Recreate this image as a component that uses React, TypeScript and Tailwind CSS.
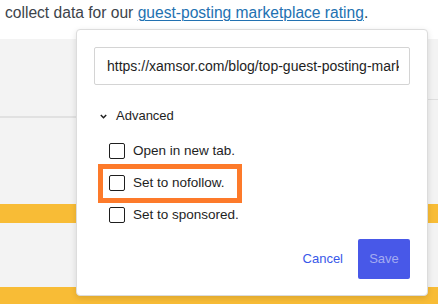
import React from "react";

function Checkbox() {
  return <span className="block w-4 h-4 shrink-0 rounded-[2px] border-[1.5px] border-[#1e1e1e] bg-white" />;
}

function Option({ label }: { label: string }) {
  return (
    <div className="flex h-8 items-center pl-[15px] gap-2">
      <Checkbox />
      <span className="text-[13.5px] leading-5 text-[#1e1e1e]">{label}</span>
    </div>
  );
}

export default function App() {
  return (
    <div
      className="relative w-[438px] h-[304px] overflow-hidden bg-[#f3f3f3]"
      style={{ fontFamily: '"Liberation Sans", Arial, sans-serif' }}
    >
      <div className="h-[39px] bg-white pl-[5px] text-[15.6px] leading-[25px] text-[#3c434a] whitespace-nowrap">
        collect data for our{" "}
        <span className="text-[#2271b1] underline underline-offset-[2px] decoration-1">
          guest-posting marketplace rating
        </span>
        .
      </div>
      <div className="flex flex-col h-[265px]">
        <div className="flex h-[165px]">
          <div className="w-[76px] flex flex-col">
            <div className="h-[77px]" />
            <div className="h-[2px] bg-[#e1e1e1]" />
          </div>
          <div className="flex-1" />
          <div className="w-[10px] flex flex-col">
            <div className="h-[60px]" />
            <div className="h-px bg-[#dedede]" />
          </div>
        </div>
        <div className="h-[19px] bg-[#f8bc36]" />
        <div className="h-[64px]" />
        <div className="flex-1 bg-[#f8bc36]" />
      </div>

      <div className="absolute left-[76px] top-[29px] w-[352px] rounded-[4px] border border-[#dcdcdc] bg-white px-[17px] pt-[17px] pb-[16px] shadow-[0_2px_6px_rgba(0,0,0,0.12)]">
        <input
          readOnly
          value="https://xamsor.com/blog/top-guest-posting-marketplaces/"
          className="block w-full h-[38px] rounded-[2px] border border-[#d4d4d4] pl-3 pr-[10px] text-[14px] text-[#1e1e1e] bg-white outline-none"
          style={{ fontFamily: '"Liberation Sans", Arial, sans-serif' }}
        />
        <div className="mt-[21px] h-5 flex items-center">
          <svg width="7" height="5" viewBox="0 0 7 5" className="ml-[6px]">
            <path d="M0.8 1 L3.5 3.7 L6.2 1" fill="none" stroke="#1e1e1e" strokeWidth="1.5" />
          </svg>
          <span className="ml-[9px] text-[13px] text-[#1e1e1e]">Advanced</span>
        </div>
        <div className="mt-[9px] flex flex-col relative">
          <Option label="Open in new tab." />
          <Option label="Set to nofollow." />
          <Option label="Set to sponsored." />
          <div className="absolute left-[4px] top-[29px] w-[144px] h-[39px] border-[5px] border-[#fd7a2a] pointer-events-none" />
        </div>
        <div className="mt-2 flex items-center justify-end">
          <button className="h-10 px-3 mr-[3px] text-[13px] text-[#3858e9]">Cancel</button>
          <button className="h-10 w-[52px] rounded-[2px] bg-[#4858e8] text-[13px] text-[#a4abf1]">Save</button>
        </div>
      </div>
    </div>
  );
}
